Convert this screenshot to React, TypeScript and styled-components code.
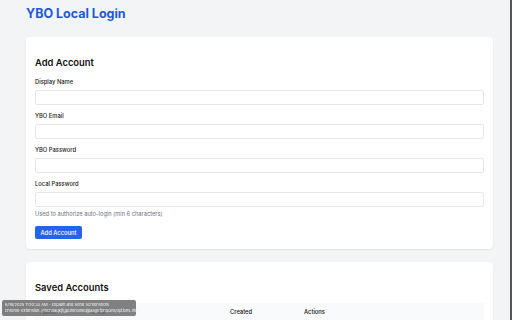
import React from 'react'
import styled, { createGlobalStyle } from 'styled-components'

const GlobalStyle = createGlobalStyle`
  html, body {
    margin: 0;
    padding: 0;
    background: #f3f4f6;
    font-family: Inter, "Liberation Sans", sans-serif;
    color: #111827;
  }
  * {
    box-sizing: border-box;
  }
`

const Page = styled.div`
  height: 100vh;
  overflow: hidden;
  padding: 5px 17px 0 26px;
  border-right: 2px solid #555;
`

const Title = styled.h1`
  margin: 0 0 15px;
  font-size: 12.5px;
  line-height: 17px;
  font-weight: 700;
  color: #2159d2;
`

const Card = styled.section`
  background: #fff;
  border-radius: 4px;
  box-shadow: 0 1px 2px rgba(0, 0, 0, 0.07);
  padding: 10px 9px 10px;
  margin-bottom: 13px;
`

const CardTitle = styled.h2`
  margin: 9px 0 8px;
  font-size: 9.4px;
  line-height: 14px;
  font-weight: 600;
  color: #111;
`

const Field = styled.div`
  display: flex;
  flex-direction: column;
  margin-bottom: 7px;

  &:last-of-type {
    margin-bottom: 0;
  }
`

const Label = styled.label`
  font-size: 5.8px;
  line-height: 8px;
  font-weight: 500;
  color: #222;
  margin-bottom: 4px;
`

const Input = styled.input`
  height: 15px;
  width: 100%;
  border: 1px solid #e6e7ea;
  border-radius: 2px;
  background: #fff;
  outline: none;
  padding: 0 4px;
  font-size: 6px;
`

const Hint = styled.p`
  margin: 3px 0 0;
  font-size: 5.7px;
  line-height: 8px;
  color: #6b7280;
`

const Button = styled.button`
  margin-top: 8px;
  height: 12.5px;
  padding: 0 5.5px;
  border: none;
  border-radius: 2px;
  background: #2563eb;
  color: #fff;
  font-family: inherit;
  font-size: 5.8px;
  font-weight: 500;
  cursor: pointer;
`

const TableHead = styled.div`
  display: grid;
  grid-template-columns: 52px 138px 74px 1fr;
  background: #f9fafb;
  height: 24px;
`

const HeadCell = styled.div`
  padding: 5px 5px 0;
  font-size: 5.8px;
  line-height: 8px;
  font-weight: 500;
  color: #111;
`

const Toast = styled.div`
  position: fixed;
  left: 2px;
  bottom: 4px;
  width: 134px;
  padding: 2px 3px;
  border-radius: 2px;
  background: rgba(110, 110, 110, 0.88);
  color: #f4f4f4;
  font-size: 4px;
  line-height: 6px;
  white-space: nowrap;
`

const fields = [
  { id: 'displayName', label: 'Display Name', type: 'text' },
  { id: 'email', label: 'YBO Email', type: 'email' },
  { id: 'password', label: 'YBO Password', type: 'password' },
  { id: 'localPassword', label: 'Local Password', type: 'password' },
]

const App: React.FC = () => {
  return (
    <Page>
      <GlobalStyle />
      <Title>YBO Local Login</Title>

      <Card>
        <CardTitle>Add Account</CardTitle>
        <form onSubmit={(e) => e.preventDefault()}>
          {fields.map((f) => (
            <Field key={f.id}>
              <Label htmlFor={f.id}>{f.label}</Label>
              <Input id={f.id} type={f.type} />
            </Field>
          ))}
          <Hint>Used to authorize auto-login (min 6 characters)</Hint>
          <Button type='submit'>Add Account</Button>
        </form>
      </Card>

      <Card>
        <CardTitle>Saved Accounts</CardTitle>
        <TableHead>
          <HeadCell>Name</HeadCell>
          <HeadCell>Email</HeadCell>
          <HeadCell>Created</HeadCell>
          <HeadCell>Actions</HeadCell>
        </TableHead>
      </Card>

      <Toast>
        6/19/2025 11:10:33 AM - Explain and Send Screenshots
        <br />
        chrome-extension://mcnoaqkjfgpdmnolnkdjpaagkfpnpolm/options.html
      </Toast>
    </Page>
  )
}

export default App
